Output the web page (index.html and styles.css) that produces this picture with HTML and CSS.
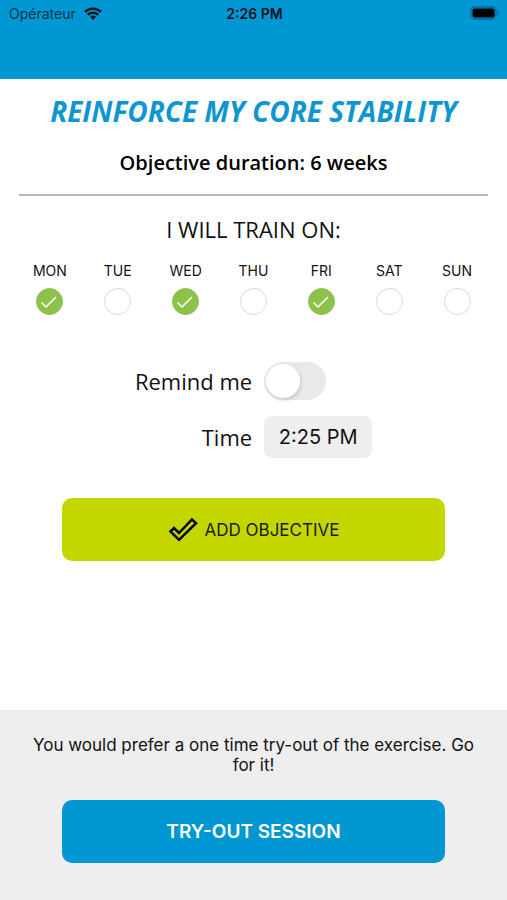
FILE: index.html
```
<!DOCTYPE html>
<html lang="en">
<head>
  <meta charset="UTF-8">
  <meta name="viewport" content="width=device-width, initial-scale=1.0">
  <title>Reinforce my core stability</title>
  <link rel="stylesheet" href="styles.css">
</head>
<body>
  <!-- Status bar -->
  <header class="header">
    <div class="status-bar">
      <div class="carrier">
        <span>Opérateur</span>
        <svg class="wifi" viewBox="0 0 18 13" aria-hidden="true">
          <path d="M1.100 4.900a11.200 11.200 0 0 1 15.800 0M3.800 7.900a7.400 7.400 0 0 1 10.400 0" fill="none" stroke="#00121a" stroke-width="2.400"/>
          <path d="M9 13 6 10a4.300 4.300 0 0 1 6 0z" fill="#00121a"/>
        </svg>
      </div>
      <span class="clock">2:26 PM</span>
      <svg class="battery" viewBox="0 0 30 14" aria-hidden="true">
        <rect x="1" y="1" width="25" height="12" rx="4" fill="none" stroke="#08678e" stroke-width="1.5"/>
        <rect x="2.500" y="2.500" width="22" height="9" rx="2" fill="#000"/>
        <path d="M27.500 5v4a2.200 2.200 0 0 0 0-4z" fill="#08678e"/>
      </svg>
    </div>
  </header>

  <!-- Objective -->
  <main class="content">
    <h1 class="title">REINFORCE MY CORE STABILITY</h1>
    <p class="duration">Objective duration: 6 weeks</p>
    <hr class="divider">

    <h2 class="subtitle">I WILL TRAIN ON:</h2>
    <div class="days">
      <label class="day">
        <span>MON</span>
        <input type="checkbox" checked>
        <svg class="tick" viewBox="0 0 27 27" aria-hidden="true"><path d="M5.500 14.500l4.500 4.500 10-10"/></svg>
      </label>
      <label class="day">
        <span>TUE</span>
        <input type="checkbox">
        <svg class="tick" viewBox="0 0 27 27" aria-hidden="true"><path d="M5.500 14.500l4.500 4.500 10-10"/></svg>
      </label>
      <label class="day">
        <span>WED</span>
        <input type="checkbox" checked>
        <svg class="tick" viewBox="0 0 27 27" aria-hidden="true"><path d="M5.500 14.500l4.500 4.500 10-10"/></svg>
      </label>
      <label class="day">
        <span>THU</span>
        <input type="checkbox">
        <svg class="tick" viewBox="0 0 27 27" aria-hidden="true"><path d="M5.500 14.500l4.500 4.500 10-10"/></svg>
      </label>
      <label class="day">
        <span>FRI</span>
        <input type="checkbox" checked>
        <svg class="tick" viewBox="0 0 27 27" aria-hidden="true"><path d="M5.500 14.500l4.500 4.500 10-10"/></svg>
      </label>
      <label class="day">
        <span>SAT</span>
        <input type="checkbox">
        <svg class="tick" viewBox="0 0 27 27" aria-hidden="true"><path d="M5.500 14.500l4.500 4.500 10-10"/></svg>
      </label>
      <label class="day">
        <span>SUN</span>
        <input type="checkbox">
        <svg class="tick" viewBox="0 0 27 27" aria-hidden="true"><path d="M5.500 14.500l4.500 4.500 10-10"/></svg>
      </label>
    </div>

    <div class="settings">
      <label for="remind">Remind me</label>
      <input class="switch" type="checkbox" id="remind">
      <label for="time">Time</label>
      <input class="time" type="text" id="time" value="2:25 PM">
    </div>

    <button class="btn btn-add" type="button">
      <svg class="check" viewBox="0 0 30 26" aria-hidden="true">
        <path d="M2.500 14.500l3.500-3.500 5 5L24 2.500l4 3.700L11 22.800z" fill="none" stroke="#000" stroke-width="2.500"/>
      </svg>
      <span>ADD OBJECTIVE</span>
    </button>
  </main>

  <!-- Try-out -->
  <footer class="tryout">
    <p>You would prefer a one time try-out of the exercise. Go for it!</p>
    <button class="btn btn-try" type="button">TRY-OUT SESSION</button>
  </footer>
</body>
</html>
```
FILE: styles.css
```
* {
  box-sizing: border-box;
}
body {
  margin: 0;
  min-height: 100vh;
  display: flex;
  flex-direction: column;
  background-color: #fff;
  color: #111;
  font-family: Inter, "Liberation Sans", sans-serif;
}

/* Status bar */
.header {
  height: 79px;
  background-color: #0097d2;
}
.status-bar {
  display: grid;
  grid-template-columns: 1fr auto 1fr;
  align-items: center;
  height: 26px;
  padding: 0 7px 0 9px;
  color: #00121a;
  font-size: 14px;
}
.carrier {
  display: flex;
  align-items: center;
  gap: 8px;
  color: #05364a;
}
.wifi {
  width: 18px;
  height: 13px;
}
.clock {
  font-weight: 600;
}
.battery {
  width: 30px;
  height: 14px;
  justify-self: end;
}

/* Objective */
.content {
  padding: 12px 19px 32px;
  text-align: center;
}
.title {
  margin: 0;
  color: #0f96d0;
  font-family: "Open Sans", "Noto Sans", sans-serif;
  font-size: 28px;
  font-style: italic;
  font-weight: 700;
  line-height: 40px;
}
.duration {
  margin: 18px 0 17px;
  color: #000;
  font-family: "Open Sans", "Noto Sans", sans-serif;
  font-size: 20px;
  font-weight: 600;
  line-height: 28px;
}
.divider {
  height: 2px;
  margin: 0;
  border: none;
  background-color: #b8b8b8;
}
.subtitle {
  margin: 18px 0 17px;
  font-family: "Open Sans", "Noto Sans", sans-serif;
  font-size: 22px;
  font-weight: 400;
  line-height: 30px;
}
.days {
  display: grid;
  grid-template-columns: repeat(7, 1fr);
  margin: 0 -3px;
}
.day {
  display: grid;
  justify-items: center;
  row-gap: 7px;
  font-size: 14px;
  line-height: 20px;
}
.day input {
  appearance: none;
  grid-area: 2 / 1;
  width: 27px;
  height: 27px;
  margin: 0;
  border: 1px solid #d8d8d8;
  border-radius: 50%;
  background-color: #fff;
}
.day input:checked {
  border-color: #8bc34a;
  background-color: #8bc34a;
}
.tick {
  display: none;
  grid-area: 2 / 1;
  width: 27px;
  height: 27px;
  fill: none;
  stroke: #fff;
  stroke-width: 1.5;
  pointer-events: none;
}
.day input:checked + .tick {
  display: block;
}

.settings {
  display: grid;
  grid-template-columns: auto auto;
  justify-content: center;
  align-items: center;
  gap: 16px 12px;
  margin: 47px 0 40px;
  font-family: "Open Sans", "Noto Sans", sans-serif;
  font-size: 22px;
  line-height: 30px;
  text-align: right;
}
.switch {
  appearance: none;
  display: flex;
  align-items: center;
  width: 62px;
  height: 38px;
  margin: 0;
  padding: 2px;
  border-radius: 19px;
  background-color: #e9e9eb;
}
.switch::before {
  content: "";
  width: 34px;
  height: 34px;
  border-radius: 50%;
  background-color: #fff;
  box-shadow: 1px 2px 4px rgba(0, 0, 0, 0.15);
}
.switch:checked {
  justify-content: flex-end;
  background-color: #8bc34a;
}
.time {
  width: 108px;
  height: 42px;
  padding: 0;
  border: none;
  border-radius: 8px;
  background-color: #eee;
  color: #111;
  font-family: Inter, "Liberation Sans", sans-serif;
  font-size: 20px;
  text-align: center;
}

.btn {
  display: flex;
  align-items: center;
  justify-content: center;
  gap: 7px;
  height: 63px;
  padding: 0;
  border: none;
  border-radius: 10px;
  font-family: inherit;
  cursor: pointer;
}
.btn-add {
  width: calc(100% - 86px);
  margin: 0 auto;
  background-color: #c3d600;
  color: #1a1c00;
  font-size: 17px;
}
.check {
  width: 30px;
  height: 26px;
}

/* Try-out */
.tryout {
  margin-top: auto;
  padding: 25px 30px 37px;
  background-color: #eee;
  text-align: center;
}
.tryout p {
  margin: 0 0 25px;
  font-size: 17px;
  line-height: 20px;
}
.btn-try {
  width: calc(100% - 64px);
  margin: 0 auto;
  background-color: #0097d2;
  color: #fff;
  font-size: 19px;
  font-weight: 600;
}
```
